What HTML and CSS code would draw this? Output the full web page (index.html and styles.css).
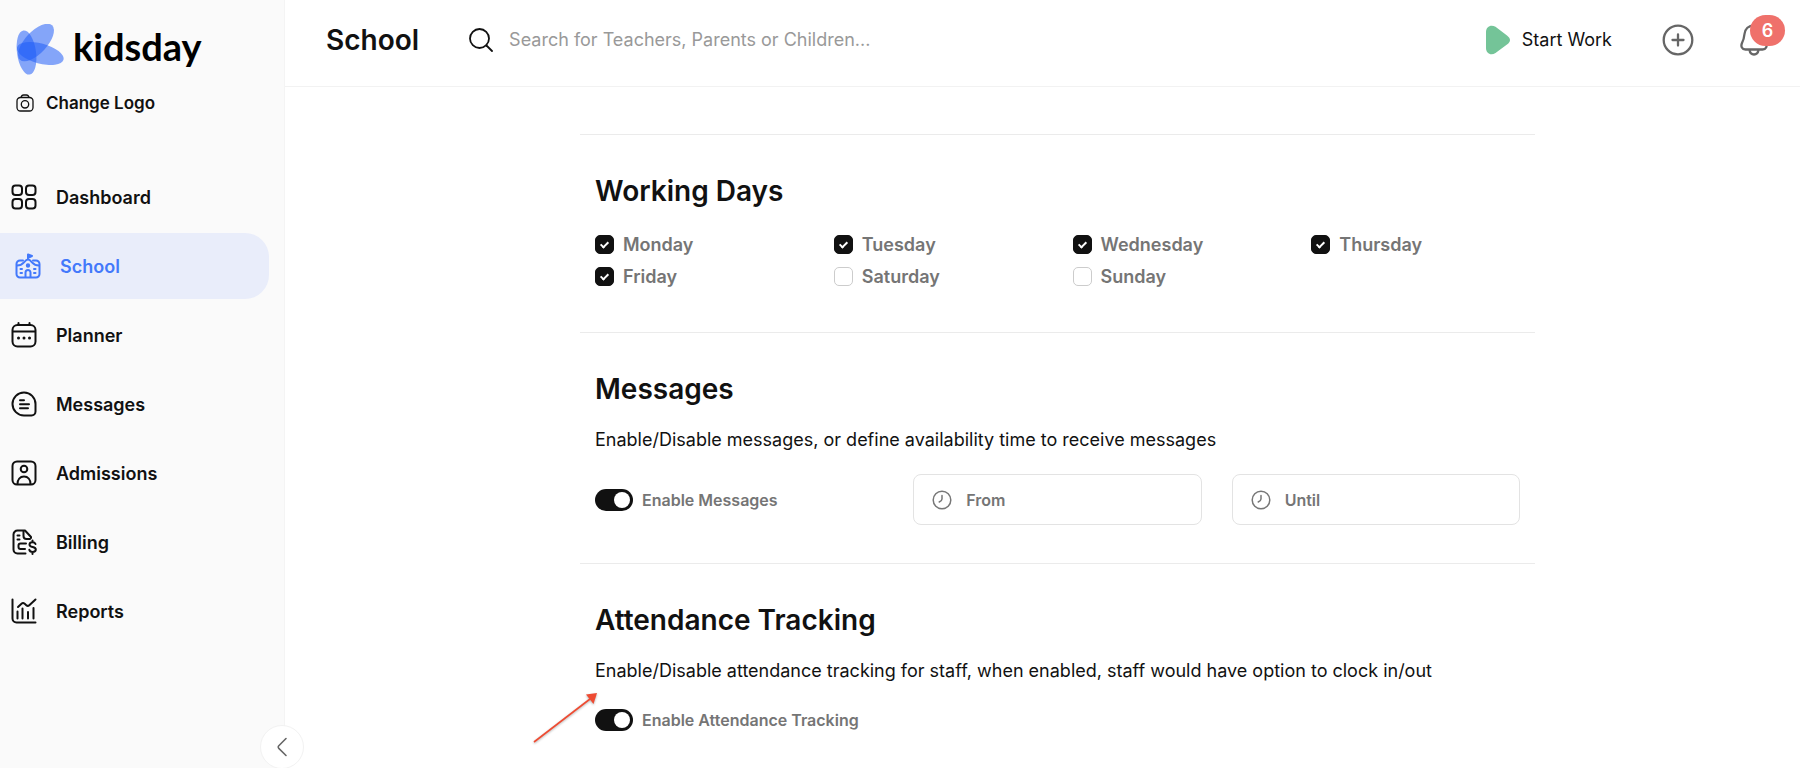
FILE: index.html
```html
<!DOCTYPE html>
<html lang="en">
<head>
    <meta charset="UTF-8" />
    <meta name="viewport" content="width=device-width, initial-scale=1.0" />
    <title>School - kidsday</title>
    <link rel="stylesheet" href="styles.css">
</head>
<body>

    <aside class="sidebar">
        <a href="#" class="logo">
            <svg width="48" height="52" viewBox="0 0 48 52" fill="#1f5cf8" fill-opacity="0.54">
                <ellipse cx="10.500" cy="28.500" rx="9.500" ry="22.300" transform="rotate(-8 10.500 28.500)" />
                <ellipse cx="20" cy="18.500" rx="11" ry="23.500" transform="rotate(43 20 18.500)" />
                <ellipse cx="24.300" cy="29.500" rx="10" ry="24" transform="rotate(-75 24.300 29.500)" />
            </svg>
            <span>kidsday</span>
        </a>
        <button class="change-logo">
            <svg width="18" height="18" viewBox="0 0 18 18" fill="none" stroke="currentColor" stroke-width="1.300">
                <rect x="1" y="3.500" width="16" height="13.500" rx="3.500" />
                <path d="M5 3.500C5.500 1.500 6.500 1 7.500 1h3c1 0 2 .5 2.500 2.500" />
                <circle cx="9" cy="10.300" r="3.700" />
            </svg>
            Change Logo
        </button>

        <nav>
            <a href="#">
                <svg class="icon" viewBox="0 0 26 26">
                    <rect x="1.500" y="1.500" width="9.500" height="9.500" rx="3" />
                    <rect x="15" y="1.500" width="9.500" height="9.500" rx="3" />
                    <rect x="1.500" y="15" width="9.500" height="9.500" rx="3" />
                    <rect x="15" y="15" width="9.500" height="9.500" rx="3" />
                </svg>
                Dashboard
            </a>
            <a href="#" class="active">
                <svg class="icon" viewBox="0 0 26 26">
                    <path d="M8 7.500H5a3.500 3.500 0 0 0-3.500 3.500v10A3.500 3.500 0 0 0 5 24.500h16a3.500 3.500 0 0 0 3.500-3.500V11A3.500 3.500 0 0 0 21 7.500h-3" />
                    <path d="M2 12.500c4 0 5-1 7-3.200C11 7 11.500 6.500 13 6.500s2 .5 4 2.800c2 2.200 3 3.200 7 3.200" />
                    <path d="M13 6V1.500l4 1.500-4 1.800" fill="currentColor" />
                    <circle cx="13" cy="12.500" r="1.200" fill="currentColor" />
                    <path d="M10.500 24v-4.500a2.500 2.500 0 0 1 5 0V24M5.500 16h1.500M5.500 20h1.500M19 16h1.500M19 20h1.500" />
                </svg>
                School
            </a>
            <a href="#">
                <svg class="icon" viewBox="0 0 26 26">
                    <rect x="1.500" y="3" width="23" height="21.500" rx="5" />
                    <path d="M2 9.500h22M7.500 1v2M18.500 1v2" />
                    <path class="dots" d="M7.500 16h.01M13 16h.01M18.500 16h.01" />
                </svg>
                Planner
            </a>
            <a href="#">
                <svg class="icon" viewBox="0 0 26 26">
                    <path d="M13 1.500A11.500 11.500 0 0 1 24.500 13v7.500a4 4 0 0 1-4 4H13a11.500 11.500 0 0 1 0-23z" />
                    <path d="M9 9.200h4M9 13.200h9M9 17.200h8" />
                </svg>
                Messages
            </a>
            <a href="#">
                <svg class="icon" viewBox="0 0 26 26">
                    <rect x="1.500" y="1.500" width="23" height="23" rx="4.500" />
                    <circle cx="13" cy="9" r="3.300" />
                    <path d="M6.500 24c0-4.500 2.500-7.500 6.500-7.500s6.500 3 6.500 7.500" />
                </svg>
                Admissions
            </a>
            <a href="#">
                <svg class="icon" viewBox="0 0 26 26">
                    <path d="M14.500 24.500H6.500a4 4 0 0 1-4-4v-15a4 4 0 0 1 4-4h7.500L20 8v1" />
                    <path d="M12.500 2v5a3 3 0 0 0 3 3H19M6.500 6.500h2M6.500 10.500h2M15 14.500H9.500a2 2 0 0 0-2 2v1.500a2 2 0 0 0 2 2H14" />
                    <path d="M24.500 15c-.5-1.300-1.600-1.800-3-1.800-1.800 0-3 .9-3 2.400 0 3.600 6.300 1.400 6.300 5 0 1.500-1.300 2.400-3.200 2.400-1.700 0-3-.7-3.300-2.200M21.500 11.500v1.500M21.500 23.500V25" />
                </svg>
                Billing
            </a>
            <a href="#">
                <svg class="icon" viewBox="0 0 26 26">
                    <path d="M1.500 1.500v19a4 4 0 0 0 4 4h19" />
                    <path d="M6.500 20.500v-7M11.500 20.500V10.500M17 20.500v-6.500M22.500 20.500V10" />
                    <path d="M7 9l3.500-3.300c1.200-1 2-.9 3.200.1l1.600 1.400c1 .9 2 .9 3 0L24.500 1.500" />
                </svg>
                Reports
            </a>
        </nav>

        <button class="collapse-btn" aria-label="Collapse menu">
            <svg width="12" height="20" viewBox="0 0 12 20" fill="none" stroke="#666" stroke-width="1.600" stroke-linecap="round">
                <path d="M10 1.500L2.800 8.700a1.800 1.800 0 0 0 0 2.600L10 18.500" />
            </svg>
        </button>
    </aside>

    <div class="page">
        <header>
            <h1>School</h1>
            <div class="search">
                <svg width="24" height="24" viewBox="0 0 24 24" fill="none" stroke="#111" stroke-width="1.800" stroke-linecap="round">
                    <circle cx="10.500" cy="10.500" r="9.500" />
                    <path d="M17.500 17.500L23 23" />
                </svg>
                <input type="search" placeholder="Search for Teachers, Parents or Children..." aria-label="Search" />
            </div>
            <button class="start-work">
                <svg width="24" height="30" viewBox="0 0 24 30" fill="#74c498">
                    <path d="M0 7C0 1.500 5 -1 9.500 1.800L21 10.500C25 13.500 25 16.500 21 19.500L9.500 28C5 31 0 28.500 0 23z" />
                </svg>
                Start Work
            </button>
            <button class="add-btn" aria-label="Add">
                <svg width="32" height="32" viewBox="0 0 32 32" fill="none" stroke="#666" stroke-width="2.300" stroke-linecap="round">
                    <circle cx="16" cy="16" r="14.300" />
                    <path d="M16 10.500v11M10.500 16h11" />
                </svg>
            </button>
            <button class="bell-btn" aria-label="Notifications">
                <svg width="28" height="32" viewBox="0 0 28 32" fill="none" stroke="#666" stroke-width="2.300">
                    <path d="M14 1.500c-5.500 0-9 3.500-9.500 8.500-.4 4-1 6-2.500 9-1.500 3.500 0 6.500 3.500 6.500h17c3.500 0 5-3 3.500-6.500-1.500-3-2.100-5-2.500-9C23 5 19.500 1.500 14 1.500z" />
                    <path d="M9.500 26c.5 3 2 4.500 4.500 4.500s4-1.500 4.500-4.500" />
                </svg>
                <span class="badge">6</span>
            </button>
        </header>

        <main>
            <section>
                <h2>Working Days</h2>
                <div class="days">
                    <label><input type="checkbox" checked />Monday</label>
                    <label><input type="checkbox" checked />Tuesday</label>
                    <label><input type="checkbox" checked />Wednesday</label>
                    <label><input type="checkbox" checked />Thursday</label>
                    <label><input type="checkbox" checked />Friday</label>
                    <label><input type="checkbox" />Saturday</label>
                    <label><input type="checkbox" />Sunday</label>
                </div>
            </section>

            <section>
                <h2>Messages</h2>
                <p>Enable/Disable messages, or define availability time to receive messages</p>
                <div class="hours">
                    <label class="switch"><input type="checkbox" checked />Enable Messages</label>
                    <div class="time-field">
                        <svg width="20" height="20" viewBox="0 0 20 20" fill="none" stroke="#777" stroke-width="1.500" stroke-linecap="round">
                            <circle cx="10" cy="10" r="8.800" />
                            <path d="M10 5.500v3.500c0 1.200-.7 2-2.800 3" />
                        </svg>
                        <input type="text" placeholder="From" aria-label="From" />
                    </div>
                    <div class="time-field">
                        <svg width="20" height="20" viewBox="0 0 20 20" fill="none" stroke="#777" stroke-width="1.500" stroke-linecap="round">
                            <circle cx="10" cy="10" r="8.800" />
                            <path d="M10 5.500v3.500c0 1.200-.7 2-2.800 3" />
                        </svg>
                        <input type="text" placeholder="Until" aria-label="Until" />
                    </div>
                </div>
            </section>

            <section>
                <h2>Attendance Tracking</h2>
                <p>Enable/Disable attendance tracking for staff, when enabled, staff would have option to clock in/out</p>
                <div class="tracking">
                    <label class="switch"><input type="checkbox" checked />Enable Attendance Tracking</label>
                </div>
                <svg class="pointer" width="68" height="56" viewBox="0 0 68 56">
                    <path d="M2 52L58 9" stroke="#ee4b32" stroke-width="1.600" />
                    <path d="M65 3L54 4.500L61.500 14z" fill="#ee4b32" />
                </svg>
            </section>
        </main>
    </div>

</body>
</html>
```
FILE: styles.css
```css
:root {
    --text: #111;
    --muted: #757575;
    --line: #ebebeb;
    --blue: #4379fb;
    --active-bg: #e9edfa;
    --side-bg: #fafafa;
}

* {
    box-sizing: border-box;
}

body {
    font-family: Inter, "Liberation Sans", sans-serif;
    font-size: 18px;
    color: var(--text);
    background: #fff;
    margin: 0;
    display: flex;
    min-height: 100vh;
}

button {
    font: inherit;
    color: inherit;
    background: none;
    border: none;
    padding: 0;
    display: flex;
    align-items: center;
    cursor: pointer;
}

input {
    font: inherit;
    margin: 0;
}

a {
    color: inherit;
    text-decoration: none;
}

svg {
    flex-shrink: 0;
}

/* sidebar */
.sidebar {
    position: relative;
    width: 285px;
    flex-shrink: 0;
    background: var(--side-bg);
    border-right: 1px solid #f4f4f4;
    padding-top: 24px;
}

.logo {
    display: flex;
    align-items: center;
    gap: 9px;
    height: 52px;
    padding-left: 16px;
    font-family: Lato, sans-serif;
    font-size: 38px;
    font-weight: 700;
    color: #000;
}

    .logo span {
        padding-bottom: 9px;
    }

.change-logo {
    gap: 12px;
    margin: 15px 0 0 16px;
    height: 24px;
    font-size: 17px;
    font-weight: 600;
}

nav {
    display: flex;
    flex-direction: column;
    gap: 3px;
    margin-top: 49px;
}

    nav a {
        display: flex;
        align-items: center;
        gap: 19px;
        height: 66px;
        margin-right: 15px;
        padding-left: 11px;
        font-weight: 600;
    }

    nav a.active {
        padding-left: 15px;
        color: var(--blue);
        background: var(--active-bg);
        border-radius: 0 24px 24px 0;
    }

.icon {
    width: 26px;
    height: 26px;
    fill: none;
    stroke: currentColor;
    stroke-width: 2;
    stroke-linecap: round;
    stroke-linejoin: round;
}

.dots {
    stroke-width: 3;
}

.collapse-btn {
    position: absolute;
    right: -20px;
    bottom: 0;
    width: 44px;
    height: 44px;
    justify-content: center;
    background: #fff;
    border: 1px solid #f2f2f2;
    border-radius: 50%;
}

/* top bar */
.page {
    flex: 1;
    min-width: 0;
}

header {
    display: flex;
    align-items: center;
    height: 87px;
    padding: 0 32px 7px 41px;
    border-bottom: 1px solid #f2f2f2;
}

h1 {
    margin: 0;
    font-size: 28px;
    font-weight: 600;
}

.search {
    flex: 1;
    display: flex;
    align-items: center;
    gap: 16px;
    margin-left: 50px;
}

    .search input {
        flex: 1;
        border: none;
        outline: none;
        padding: 0;
        background: none;
    }

    .search input::placeholder {
        color: #999;
    }

.start-work {
    gap: 12px;
}

.add-btn {
    margin-left: 50px;
}

.bell-btn {
    position: relative;
    margin-left: 46px;
}

.badge {
    position: absolute;
    left: 10px;
    top: -9px;
    width: 35px;
    height: 31px;
    border-radius: 16px;
    background: #ef716b;
    color: #fff;
    font-weight: 600;
    line-height: 31px;
    text-align: center;
}

/* settings */
main {
    margin: 47px 265px 0 295px;
}

section {
    position: relative;
    border-top: 1px solid var(--line);
    padding: 39px 15px 38px;
}

h2 {
    margin: 0;
    font-size: 28px;
    font-weight: 600;
    line-height: 34px;
}

p {
    margin: 22px 0;
    line-height: 24px;
}

.days {
    display: grid;
    grid-template-columns: repeat(4, 1fr);
    row-gap: 8px;
    margin: 24px -15px 0;
    padding-bottom: 6px;
}

    .days label {
        display: flex;
        align-items: center;
        gap: 9px;
        height: 24px;
        padding-left: 15px;
        color: var(--muted);
        font-weight: 600;
    }

    .days input {
        appearance: none;
        display: flex;
        justify-content: center;
        width: 19px;
        height: 19px;
        border: 1px solid #ccc;
        border-radius: 5px;
    }

    .days input:checked {
        background: var(--text);
        border-color: var(--text);
    }

    .days input:checked::before {
        content: "";
        width: 3px;
        height: 6px;
        margin-top: 4px;
        border: solid #fff;
        border-width: 0 2px 2px 0;
        transform: rotate(45deg);
    }

.hours {
    display: grid;
    grid-template-columns: repeat(3, minmax(0, 1fr));
    column-gap: 30px;
    align-items: center;
}

.tracking {
    padding-top: 4px;
}

.switch {
    display: flex;
    align-items: center;
    gap: 9px;
    height: 22px;
    font-size: 16px;
    font-weight: 600;
    color: var(--muted);
}

    .switch input {
        appearance: none;
        width: 38px;
        height: 22px;
        padding: 3px;
        border-radius: 11px;
        background: #ccc;
    }

    .switch input::before {
        content: "";
        display: block;
        width: 16px;
        height: 16px;
        border-radius: 50%;
        background: #fff;
    }

    .switch input:checked {
        background: var(--text);
    }

    .switch input:checked::before {
        margin-left: auto;
    }

.time-field {
    display: flex;
    align-items: center;
    gap: 14px;
    height: 51px;
    padding: 0 18px;
    border: 1px solid #e3e3e3;
    border-radius: 8px;
}

    .time-field input {
        flex: 1;
        min-width: 0;
        padding: 0;
        border: none;
        outline: none;
        background: none;
        font-size: 16px;
        font-weight: 600;
    }

    .time-field input::placeholder {
        color: var(--muted);
    }

.pointer {
    position: absolute;
    left: -48px;
    top: 126px;
    filter: drop-shadow(0 1px 1px rgba(0,0,0,0.3));
}

@media (max-width: 1400px) {
    main {
        margin: 47px 40px 0;
    }
}
```
